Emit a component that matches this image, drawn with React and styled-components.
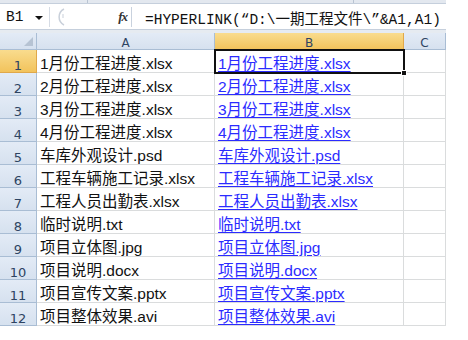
import React from "react";
import styled, { createGlobalStyle } from "styled-components";

const Global = createGlobalStyle`
  html, body { margin: 0; padding: 0; background: #ffffff; }
  * { box-sizing: border-box; }
`;

const Window = styled.div`
  width: 468px;
  height: 340px;
  background: #ffffff;
  overflow: hidden;
`;

const TopStrip = styled.div`
  height: 4px;
  width: 446px;
  background: #e3e8ef;
  border-bottom: 1px solid #c5cfdc;
  display: flex;
`;

const StripDivider = styled.div`
  width: ${(p) => p.$w}px;
  border-right: 1px solid #b9c4d2;
`;

const FormulaBar = styled.div`
  width: 446px;
  height: 26px;
  display: flex;
  align-items: stretch;
  background: #ffffff;
  border-bottom: 1px solid #c5cfdc;
  padding: 3px 0 2px 0;
`;

const NameBox = styled.div`
  width: 50px;
  display: flex;
  align-items: center;
  justify-content: space-between;
  padding: 0 6px 0 6px;
  font-family: "Liberation Mono", "Noto Sans CJK SC", monospace;
  font-size: 14.5px;
  color: #111;
  border-right: 1px solid #d6dce5;
`;

const Caret = styled.span`
  width: 0;
  height: 0;
  border-left: 4px solid transparent;
  border-right: 4px solid transparent;
  border-top: 4px solid #111;
  margin-top: 2px;
`;

const Middle = styled.div`
  width: 81px;
  display: flex;
  align-items: center;
  justify-content: space-between;
  padding: 0 4px 0 3px;
`;

const Fx = styled.span`
  font-family: "Liberation Serif", serif;
  font-style: italic;
  font-weight: bold;
  font-size: 13px;
  color: #333;
  letter-spacing: -1px;
`;

const FormulaInput = styled.div`
  flex: 1;
  display: flex;
  align-items: center;
  padding-left: 13px;
  border-left: 1px solid #c9d2de;
  font-family: "Liberation Mono", "Noto Sans CJK SC", monospace;
  font-size: 14.5px;
  color: #111;
  white-space: nowrap;
  overflow: hidden;
`;

const Gap = styled.div`
  height: 3px;
  width: 446px;
  background: #e6ebf1;
`;

const Sheet = styled.div`
  display: grid;
  grid-template-columns: 37px 178px 189px 42px;
  grid-template-rows: 17px repeat(12, 23px);
  width: 446px;
`;

const HeadCell = styled.div`
  display: flex;
  align-items: flex-end;
  justify-content: center;
  padding-bottom: ${(p) => (p.$row ? 0 : 0)}px;
  background: ${(p) =>
    p.$sel
      ? "linear-gradient(#f9dc8e, #f2c35c)"
      : "linear-gradient(#e3ebf6, #d6e1ef)"};
  border-right: 1px solid ${(p) => (p.$sel ? "#e0a84a" : "#a9bdd4")};
  border-bottom: 1px solid ${(p) => (p.$sel ? "#e0a84a" : "#a9bdd4")};
  font-family: "DejaVu Sans", "Liberation Sans", sans-serif;
  font-size: ${(p) => (p.$row ? 13 : 12)}px;
  color: #2e4462;
  line-height: 1;
  position: relative;
  overflow: hidden;
`;

const CornerTri = styled.span`
  position: absolute;
  right: 3px;
  bottom: 3px;
  width: 0;
  height: 0;
  border-left: 9px solid transparent;
  border-bottom: 9px solid #b6c3d3;
`;

const Cell = styled.div`
  display: flex;
  align-items: center;
  padding: 2px 0 0 3px;
  border-right: 1px solid #dadcdd;
  border-bottom: 1px solid #dadcdd;
  font-family: "Liberation Sans", "Noto Sans CJK SC", sans-serif;
  font-size: 15.5px;
  color: ${(p) => (p.$link ? "#2b2bff" : "#111111")};
  text-decoration: ${(p) => (p.$link ? "underline" : "none")};
  text-underline-offset: 2px;
  white-space: nowrap;
  overflow: visible;
  position: relative;
  outline: ${(p) => (p.$active ? "2px solid #111" : "none")};
  outline-offset: -1px;
  z-index: ${(p) => (p.$active ? 2 : 0)};
`;

const FillHandle = styled.span`
  position: absolute;
  right: -4px;
  bottom: -4px;
  width: 6px;
  height: 6px;
  background: #111;
  border: 1px solid #fff;
`;

const Grip = () => (
  <svg width="14" height="20" viewBox="0 0 14 20">
    <path d="M11 2 A9 9 0 0 0 11 18" fill="none" stroke="#c9d0da" strokeWidth="1.5" />
    <path d="M9 8 L11 8 M9 10 L11 10" stroke="#c9d0da" strokeWidth="1" />
  </svg>
);

const files = [
  "1月份工程进度.xlsx",
  "2月份工程进度.xlsx",
  "3月份工程进度.xlsx",
  "4月份工程进度.xlsx",
  "车库外观设计.psd",
  "工程车辆施工记录.xlsx",
  "工程人员出勤表.xlsx",
  "临时说明.txt",
  "项目立体图.jpg",
  "项目说明.docx",
  "项目宣传文案.pptx",
  "项目整体效果.avi",
];

export default function App() {
  return (
    <Window>
      <Global />
      <TopStrip>
        <StripDivider $w={88} />
        <StripDivider $w={266} />
      </TopStrip>
      <FormulaBar>
        <NameBox>
          B1 <Caret />
        </NameBox>
        <Middle>
          <Grip />
          <Fx>fx</Fx>
        </Middle>
        <FormulaInput>=HYPERLINK(“D:\一期工程文件\”&amp;A1,A1)</FormulaInput>
      </FormulaBar>
      <Gap />
      <Sheet>
        <HeadCell>
          <CornerTri />
        </HeadCell>
        <HeadCell>A</HeadCell>
        <HeadCell $sel>B</HeadCell>
        <HeadCell>C</HeadCell>
        {files.map((f, i) => (
          <React.Fragment key={f}>
            <HeadCell $row $sel={i === 0}>
              {i + 1}
            </HeadCell>
            <Cell>{f}</Cell>
            <Cell $link $active={i === 0}>
              {f}
              {i === 0 && <FillHandle />}
            </Cell>
            <Cell />
          </React.Fragment>
        ))}
      </Sheet>
    </Window>
  );
}
